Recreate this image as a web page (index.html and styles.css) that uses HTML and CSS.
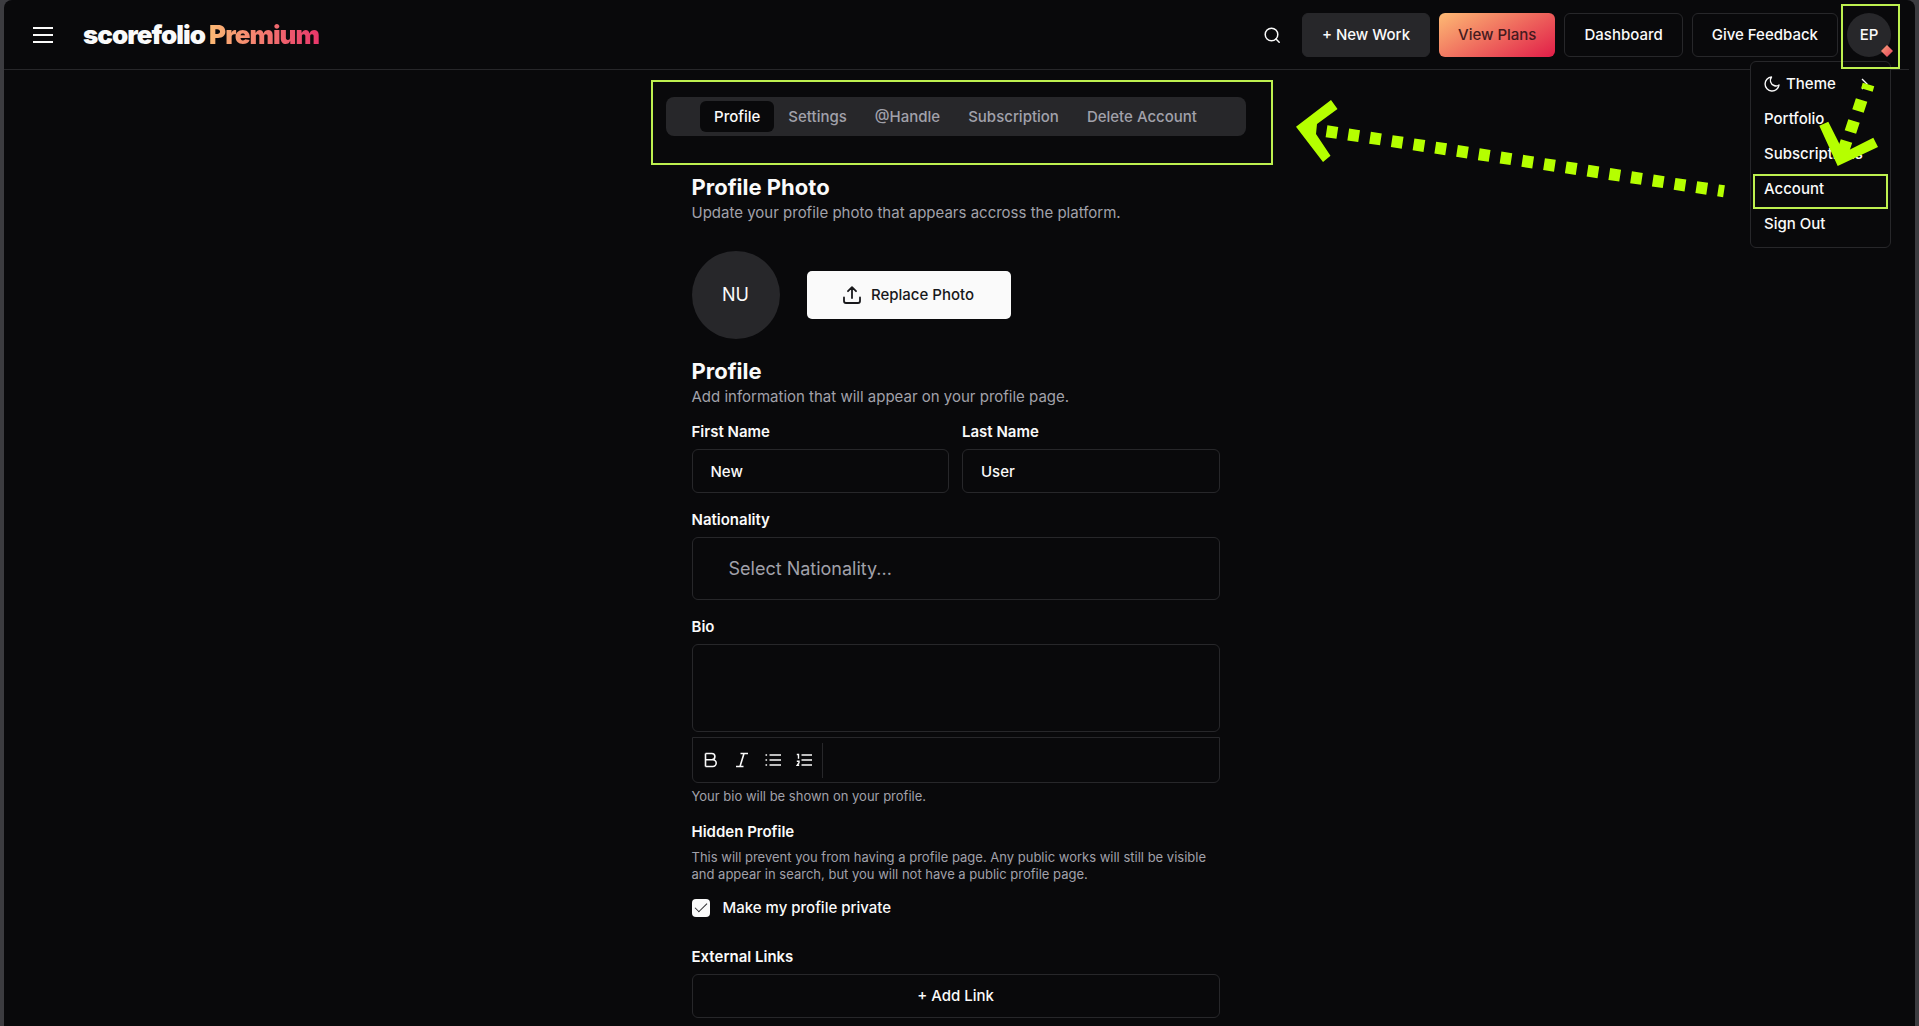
FILE: index.html
```html
<!DOCTYPE html>
<html lang="en">
<head>
<meta charset="utf-8">
<meta name="viewport" content="width=device-width, initial-scale=1">
<title>Account - scorefolio</title>
<link rel="stylesheet" href="styles.css">
</head>
<body>
<div class="app">
  <header class="header">
    <button class="icon-button" type="button" aria-label="Menu">
      <svg width="20" height="18" viewBox="0 0 20 18" fill="none" stroke="currentColor" stroke-width="2"><path d="M0 2h20M0 9h20M0 16h20"/></svg>
    </button>
    <a class="logo" href="#">scorefolio <span class="logo-tier">Premium</span></a>
    <div class="actions">
      <button class="icon-button search" type="button" aria-label="Search">
        <svg width="18" height="18" viewBox="0 0 18 18" fill="none" stroke="currentColor" stroke-width="1.500" stroke-linecap="round"><circle cx="8.500" cy="8.500" r="6.300"/><path d="M13 13l3.200 3.200"/></svg>
      </button>
      <button class="button button-muted" type="button">+ New Work</button>
      <button class="button button-plans" type="button">View Plans</button>
      <a class="button" href="#">Dashboard</a>
      <button class="button" type="button">Give Feedback</button>
      <div class="user">
        <button class="user-avatar" type="button" aria-label="User menu">EP</button>
        <svg class="user-badge" width="12" height="12" viewBox="0 0 12 12"><defs><linearGradient id="gem" x1="0" y1="0" x2="1" y2="1"><stop offset="0" stop-color="#fba37a"/><stop offset="1" stop-color="#e3405a"/></linearGradient></defs><path d="M6 0L12 6 6 12 0 6z" fill="url(#gem)"/></svg>
        <span class="mark mark-user"></span>
        <nav class="menu" aria-label="User">
          <a class="menu-item" href="#">
            <svg width="16" height="16" viewBox="0 0 16 16" fill="none" stroke="currentColor" stroke-width="1.400" stroke-linejoin="round"><path d="M7.500 1A7 7 0 1 0 15 9 5 5 0 0 1 10 9.500 5.500 5.500 0 0 1 7.500 1z"/></svg>
            Theme
            <svg class="menu-arrow" width="8" height="12" viewBox="0 0 8 12" fill="none" stroke="currentColor" stroke-width="1.400"><path d="M1 1l5 5-5 5"/></svg>
          </a>
          <a class="menu-item" href="#">Portfolio</a>
          <a class="menu-item" href="#">Subscriptions</a>
          <a class="menu-item" href="#">Account<span class="mark mark-account"></span></a>
          <a class="menu-item" href="#">Sign Out</a>
        </nav>
      </div>
    </div>
  </header>

  <main class="main">
    <div class="tabs" role="tablist">
      <button class="tab tab-active" type="button" role="tab" aria-selected="true">Profile</button>
      <button class="tab" type="button" role="tab">Settings</button>
      <button class="tab" type="button" role="tab">@Handle</button>
      <button class="tab" type="button" role="tab">Subscription</button>
      <button class="tab" type="button" role="tab">Delete Account</button>
      <span class="mark mark-tabs"></span>
    </div>

    <form class="form">
      <section>
        <h2 class="title">Profile Photo</h2>
        <p class="subtitle">Update your profile photo that appears accross the platform.</p>
        <div class="photo">
          <div class="photo-avatar">NU</div>
          <button class="replace" type="button">
            <svg width="18" height="18" viewBox="0 0 18 18" fill="none" stroke="currentColor" stroke-width="1.800" stroke-linecap="round" stroke-linejoin="round"><path d="M1 11.500V15a2 2 0 0 0 2 2h12a2 2 0 0 0 2-2v-3.500M9 12V1.500M5 5.200l4-4 4 4"/></svg>
            Replace Photo
          </button>
        </div>
      </section>

      <section>
        <h2 class="title">Profile</h2>
        <p class="subtitle">Add information that will appear on your profile page.</p>
        <div class="fields">
          <div class="names">
            <div class="field"><label class="label" for="first">First Name</label><input class="input" id="first" type="text" value="New"></div>
            <div class="field"><label class="label" for="last">Last Name</label><input class="input" id="last" type="text" value="User"></div>
          </div>
          <div class="field">
            <label class="label" for="nationality">Nationality</label>
            <input class="input input-large" id="nationality" type="text" placeholder="Select Nationality...">
          </div>
          <div class="field">
            <label class="label" for="bio">Bio</label>
            <div class="editor">
              <textarea class="input bio" id="bio"></textarea>
              <div class="toolbar">
                <div class="tools">
                  <button class="tool" type="button" aria-label="Bold"><svg width="16" height="16" viewBox="0 0 16 16" fill="none" stroke="currentColor" stroke-width="1.600" stroke-linejoin="round"><path d="M2.500 1.500v13M2.500 1.500h6.300a3.100 3.100 0 0 1 0 6.200H2.500M8.800 7.700h1a3.400 3.400 0 0 1 0 6.800H2.500"/></svg></button>
                  <button class="tool" type="button" aria-label="Italic"><svg width="16" height="16" viewBox="0 0 16 16" fill="none" stroke="currentColor" stroke-width="1.600"><path d="M6.500 1.500h7.500M2 14.500h7.500M10 1.500l-4 13"/></svg></button>
                  <button class="tool" type="button" aria-label="Bulleted list"><svg width="16" height="16" viewBox="0 0 16 16" fill="none" stroke="currentColor" stroke-width="1.600"><path d="M4.500 3H16M4.500 8H16M4.500 13H16M0.500 3h1.600M0.500 8h1.600M0.500 13h1.600"/></svg></button>
                  <button class="tool" type="button" aria-label="Numbered list"><svg width="16" height="16" viewBox="0 0 16 16" fill="none" stroke="currentColor" stroke-width="1.600"><path d="M5.500 3H16M5.500 8H16M5.500 13H16"/><path d="M0.800 2.500h1.700v4.200M0.800 9.200h2.200v1.500l-1.800 2.500h2" stroke-width="1.400"/></svg></button>
                </div>
                <span class="divider"></span>
              </div>
              <p class="hint">Your bio will be shown on your profile.</p>
            </div>
          </div>
          <div class="field">
            <h3 class="label">Hidden Profile</h3>
            <p class="hint">This will prevent you from having a profile page. Any public works will still be visible and appear in search, but you will not have a public profile page.</p>
            <div class="private">
              <input class="checkbox" id="private" type="checkbox" checked>
              <label for="private">Make my profile private</label>
            </div>
          </div>
          <div class="field links">
            <h3 class="label">External Links</h3>
            <button class="button button-wide" type="button">+ Add Link</button>
          </div>
        </div>
      </section>
    </form>
  </main>

  <svg class="arrows" width="600" height="110" viewBox="1290 90 600 110" aria-hidden="true">
    <g fill="none" stroke="#b5ff00">
      <path d="M1326.500 131.200L1724 191.300" stroke-width="12" stroke-dasharray="11 11"/>
      <path d="M1868.500 84.500l-1.600 5.500M1861.600 100l-3.600 11M1854 121l-3.600 11M1846.500 141l-3.600 11" stroke-width="12"/>
    </g>
    <g fill="#b5ff00">
      <path d="M1296 126.700L1331 100l6.500 9L1317 124l-1 10 14.500 21.700-7.500 6.300z"/>
      <path d="M1819.300 125.700l9-4L1841 147l8 3 24.300-12.300 4.700 9.300-40.300 19z"/>
    </g>
  </svg>
</div>
</body>
</html>
```
FILE: styles.css
```css
* { box-sizing: border-box; }

html { background: #3c3c40; }

body {
  margin: 0;
  color: #fafafa;
  font: 500 15px/20px Inter, "Liberation Sans", sans-serif;
}

button, input, textarea {
  color: inherit;
  font: inherit;
}

button { padding: 0; border: 0; background: none; cursor: pointer; }
a { color: inherit; text-decoration: none; }
h2, h3, p { margin: 0; }
svg { display: block; flex: none; }

.app {
  position: relative;
  min-height: 100vh;
  margin: 0 4px;
  padding-right: 6px;
  border-radius: 8px 8px 0 0;
  background: #09090b;
}

.header {
  display: flex;
  align-items: center;
  height: 70px;
  padding: 0 18px 0 29px;
  border-bottom: 1px solid #27272a;
}

.icon-button { display: flex; }
.search { margin-right: 12px; }

.logo {
  margin-left: 30px;
  font-size: 26px;
  font-weight: 900;
  line-height: 32px;
  letter-spacing: -1px;
}

.logo-tier {
  background: linear-gradient(90deg, #fdba74, #e8366a);
  background-clip: text;
  color: transparent;
}

.actions {
  display: flex;
  align-items: center;
  gap: 9px;
  margin-left: auto;
}

.button {
  display: flex;
  align-items: center;
  justify-content: center;
  height: 44px;
  padding: 0 19px;
  border: 1px solid #27272a;
  border-radius: 6px;
}

.button-muted { background: #27272a; }

.button-plans {
  border: 0;
  background: linear-gradient(150deg, #fdba74, #e11d48);
  color: #451a1e;
}

.button-wide { width: 100%; }

.user { position: relative; }

.user-avatar {
  display: block;
  width: 44px;
  height: 44px;
  border-radius: 50%;
  background: #27272a;
}

.user-badge { position: absolute; right: -2px; bottom: 0; }

.mark {
  position: absolute;
  border: 2px solid #bdf04f;
  pointer-events: none;
}

.mark-user { inset: -9px -9px -12px -6px; z-index: 2; }
.mark-account { inset: 2px -3px -2px; }
.mark-tabs { inset: -17px -27px -29px -15px; }

.menu {
  position: absolute;
  top: 48px;
  right: 0;
  width: 141px;
  padding: 5px;
  border: 1px solid #27272a;
  border-radius: 6px;
  background: #09090b;
}

.menu-item {
  position: relative;
  display: flex;
  align-items: center;
  gap: 6px;
  height: 35px;
  padding: 0 8px;
}

.menu-arrow { margin-left: auto; margin-right: 8px; }

.main {
  display: flex;
  flex-direction: column;
  align-items: center;
  padding: 27px 2px 7px 0;
}

.tabs {
  position: relative;
  display: flex;
  align-items: center;
  justify-content: center;
  width: 580px;
  height: 39px;
  border-radius: 8px;
  background: #27272a;
  color: #a1a1aa;
}

.tab {
  height: 31px;
  padding: 0 14px;
  border-radius: 6px;
}

.tab-active { background: #09090b; color: #fafafa; }

.form { width: 528px; max-width: 100%; margin-top: 38px; }

.title { font-size: 22px; font-weight: 700; line-height: 27px; }

.subtitle {
  color: #a1a1aa;
  font-weight: 400;
  line-height: 24px;
}

.photo {
  display: flex;
  align-items: center;
  gap: 27px;
  margin: 26px 0 19px;
}

.photo-avatar {
  display: grid;
  place-items: center;
  width: 88px;
  height: 88px;
  border-radius: 50%;
  background: #27272a;
  font-size: 18px;
  font-weight: 400;
}

.replace {
  display: flex;
  align-items: center;
  justify-content: center;
  gap: 10px;
  width: 204px;
  height: 48px;
  border-radius: 5px;
  background: #fafafa;
  color: #18181b;
}

.fields {
  display: flex;
  flex-direction: column;
  gap: 17px;
  margin-top: 13px;
}

.field { display: flex; flex-direction: column; gap: 7px; }
.names { display: grid; grid-template-columns: 1fr 1fr; gap: 13px; }
.label { font-size: 15px; font-weight: 600; line-height: 20px; }

.input {
  display: block;
  width: 100%;
  height: 44px;
  padding: 0 18px;
  border: 1px solid #27272a;
  border-radius: 6px;
  background: transparent;
}

.input-large {
  height: 63px;
  padding: 0 36px;
  font-size: 18px;
  font-weight: 400;
}

.input::placeholder { color: #a1a1aa; opacity: 1; }

.bio { height: 88px; padding: 12px 18px; resize: none; }
.editor { display: flex; flex-direction: column; gap: 5px; }

.toolbar {
  display: flex;
  align-items: center;
  gap: 10px;
  height: 46px;
  padding: 0 10px;
  border: 1px solid #27272a;
  border-radius: 0 0 6px 6px;
}

.tools { display: flex; gap: 15px; }
.tool { display: flex; }
.divider { width: 1px; height: 35px; background: #27272a; }

.hint {
  color: #a1a1aa;
  font-size: 13px;
  font-weight: 400;
  line-height: 17px;
}

.private {
  display: flex;
  align-items: center;
  gap: 13px;
  margin-top: 8px;
}

.checkbox {
  appearance: none;
  width: 18px;
  height: 18px;
  margin: 0;
  border-radius: 4px;
  background: #fafafa;
  display: grid;
  place-items: center;
}

.checkbox:checked::after {
  content: "";
  width: 11px;
  height: 5px;
  margin-bottom: 4px;
  border: solid #27272a;
  border-width: 0 0 1px 1px;
  rotate: -45deg;
}

.links { margin-top: 12px; }

.arrows {
  position: absolute;
  top: 90px;
  right: 25px;
  z-index: 3;
  overflow: visible;
  pointer-events: none;
}
```
